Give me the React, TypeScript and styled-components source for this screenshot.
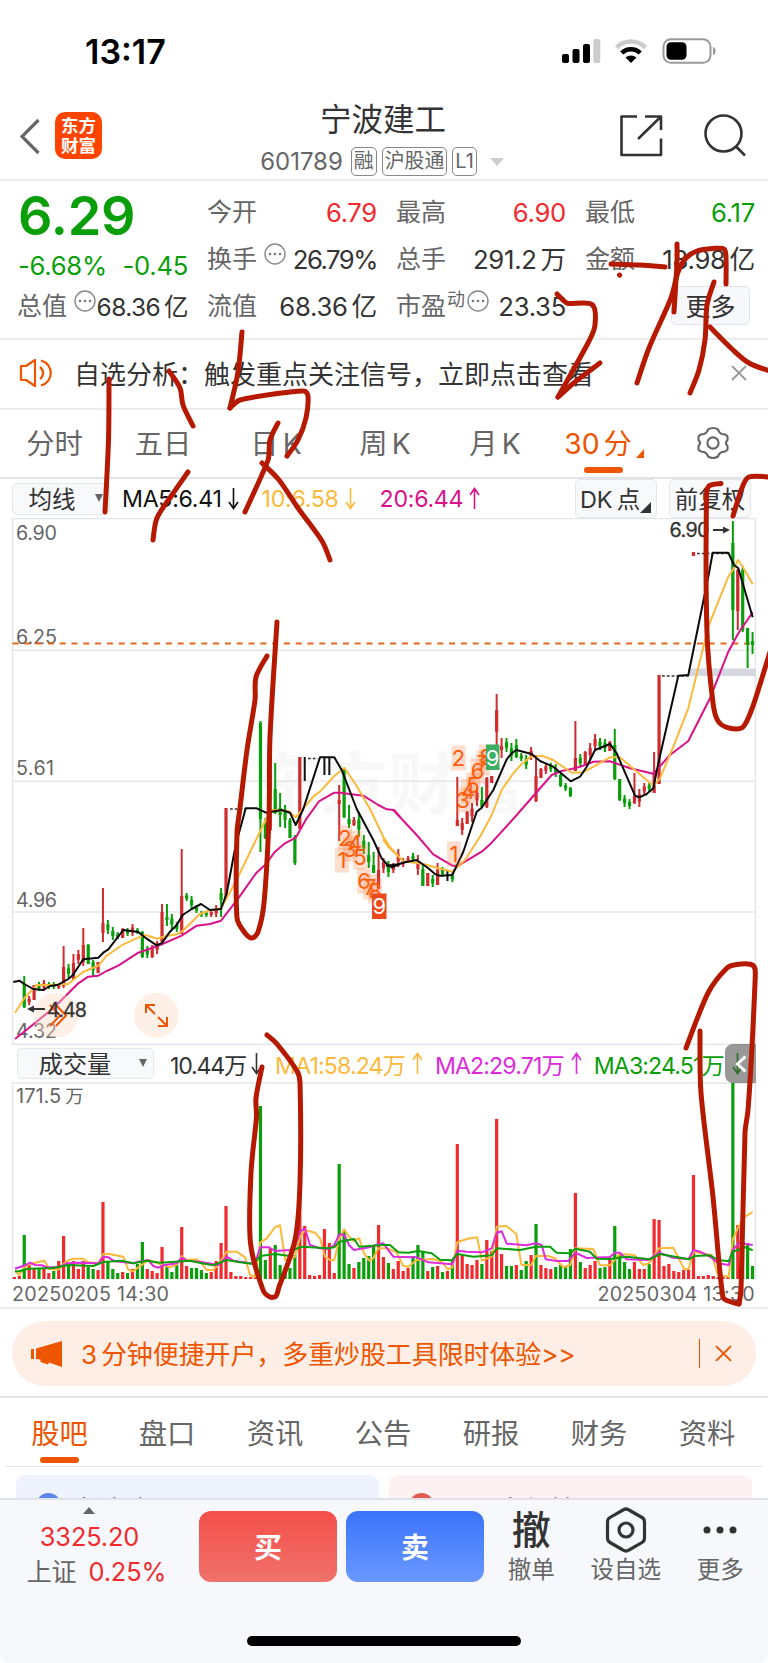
import React from "react";
import styled, { createGlobalStyle } from "styled-components";

const RED = "#f02a2d";
const GREEN = "#0a9f0a";
const ORANGE = "#ee5500";
const YELLOW = "#fbb93c";
const MAGENTA = "#d9128a";
const PURPLE = "#dd2bdd";

const GlobalStyle = createGlobalStyle`
  * { box-sizing: border-box; }
  body {
    margin: 0;
    background: #fff;
    font-family: Inter, "Noto Sans CJK SC", sans-serif;
    color: #333;
  }
  svg { display: block; flex: none; }
`;

const Page = styled.div`
  position: relative;
  width: 768px;
  height: 1663px;
  overflow: hidden;
  display: flex;
  flex-direction: column;
  background: #fff;
  white-space: nowrap;

  > * { flex: none; }
`;

const StatusBar = styled.div`
  height: 93px;
  padding: 9px 52px 0 85px;
  display: flex;
  align-items: center;
  justify-content: space-between;
`;

const Clock = styled.div`
  font-size: 34px;
  font-weight: 600;
  letter-spacing: 0;
  color: #000;
`;

const Header = styled.header`
  height: 88px;
  padding: 0 22px 0 20px;
  border-bottom: 2px solid #ececee;
  display: grid;
  grid-template-columns: 200px 1fr 200px;
`;

const HeaderSide = styled.div<{ $right?: boolean }>`
  display: flex;
  gap: ${(p) => (p.$right ? 41 : 15)}px;
  padding-top: ${(p) => (p.$right ? 21 : 19)}px;
  justify-content: ${(p) => (p.$right ? "flex-end" : "flex-start")};
`;

const AppLogo = styled.div`
  width: 47px;
  height: 47px;
  border-radius: 10px;
  background: #ff4400;
  color: #fff;
  font-size: 17.5px;
  font-weight: 700;
  line-height: 19.5px;
  padding-top: 4px;
  text-align: center;
`;

const HeaderCenter = styled.div`
  display: flex;
  flex-direction: column;
  align-items: center;
`;

const Title = styled.h1`
  margin: 9px 0 0;
  font-size: 31.5px;
  font-weight: 400;
  line-height: 36px;
  color: #333;
`;

const SubTitle = styled.div`
  display: flex;
  align-items: center;
  gap: 5px;
  margin: 9px 0 0 -2px;
  font-size: 24px;
  color: #666;
  line-height: 29px;
  letter-spacing: -0.05px;
`;

const Tag = styled.span<{ $first?: boolean }>`
  height: 29px;
  line-height: 26px;
  padding: 0 2px;
  margin-left: ${(p) => (p.$first ? 3 : 0)}px;
  border: 1.5px solid #888;
  border-radius: 5px;
  font-size: 19.9px;
  letter-spacing: 0;
`;

const Quote = styled.section`
  height: 159px;
  padding: 0 14px 0 18px;
  border-bottom: 2px solid #ececee;
  display: grid;
  grid-template-columns: 170px 169px 169px 169px;
  column-gap: 20px;
`;

const QuoteCol = styled.div`
  display: grid;
  grid-template-rows: 47px 47px 47px;
  padding-top: 7px;
`;

const Cell = styled.div<{ $color?: string; $drop?: number; $small?: boolean }>`
  display: flex;
  justify-content: space-between;
  align-items: center;
  font-size: ${(p) => (p.$small ? 24.5 : 25.7)}px;
  letter-spacing: ${(p) => (p.$small ? -0.6 : -0.3)}px;
  line-height: 30px;
  padding-top: ${(p) => p.$drop || 0}px;
  color: ${(p) => p.$color || "#333"};
`;

const Label = styled.span`
  display: flex;
  align-items: center;
  margin-left: -1px;
  color: #666;
  font-size: 25px;
  letter-spacing: 0;
  gap: 7px;
`;

const Value = styled.span<{ $tight?: boolean }>`
  padding-top: 2px;
  letter-spacing: ${(p) => (p.$tight ? "-1.5px" : "inherit")};
`;

const Small = styled.span`
  font-size: 18px;
  line-height: 20px;
  margin: -12px -5px 0 -6px;
`;

const Price = styled.div`
  font-size: 54px;
  font-weight: 600;
  letter-spacing: -0.2px;
  color: ${GREEN};
  line-height: 54px;
  padding-top: 1px;
`;

const Unit = styled.span`
  margin-left: 4px;
`;

const MoreButton = styled.button`
  width: 79px;
  height: 39px;
  margin-left: auto;
  margin-right: 5px;
  padding: 0;
  border: 1.5px solid #e2e4e9;
  border-radius: 5px;
  background: #f7f8fb;
  font: 400 25px "Noto Sans CJK SC", sans-serif;
  line-height: 33px;
  color: #333;
`;

const Notice = styled.section`
  height: 70px;
  padding: 0 21px 2px 19px;
  border-bottom: 2px solid #ececee;
  display: flex;
  align-items: center;
  font-size: 26px;
`;

const NoticeText = styled.span`
  margin-left: 21px;
  margin-top: -2px;
  flex: 1;
`;

const PeriodTabs = styled.nav`
  height: 69px;
  border-bottom: 2px solid #e2e4e8;
  display: grid;
  grid-template-columns: 109px 108px 118px 100px 120px 98px 120px;
`;

const Tab = styled.div<{ $active?: boolean; $lift?: number }>`
  position: relative;
  display: flex;
  align-items: center;
  justify-content: center;
  padding-bottom: ${(p) => p.$lift || 0}px;
  font-size: 28.3px;
  color: ${(p) => (p.$active ? ORANGE : "#666")};
`;

const Underline = styled.i<{ $bottom: number }>`
  position: absolute;
  left: calc(50% - 20px);
  bottom: ${(p) => p.$bottom}px;
  width: 39px;
  height: 6px;
  border-radius: 3px;
  background: ${ORANGE};
`;

const Corner = styled.i<{ $size: number; $color: string }>`
  position: absolute;
  right: 5px;
  bottom: 4px;
  border-left: ${(p) => p.$size}px solid transparent;
  border-bottom: ${(p) => p.$size}px solid ${(p) => p.$color};
`;

const IndicatorRow = styled.div<{ $height: number; $left: number }>`
  height: ${(p) => p.$height}px;
  padding: 0 17px 0 ${(p) => p.$left}px;
  display: flex;
  align-items: center;
  font-size: 23.2px;

  > * { flex: none; }
`;

const Picker = styled.div<{ $width: number; $height: number }>`
  position: relative;
  width: ${(p) => p.$width}px;
  height: ${(p) => p.$height}px;
  padding-bottom: 2px;
  border: 1.5px solid #e4e6ea;
  border-radius: 5px;
  background: #f8f9fb;
  display: flex;
  align-items: center;
  justify-content: center;
  font-size: 23.5px;
  color: #333;
`;

const Caret = styled.i<{ $gap: number }>`
  margin-left: ${(p) => p.$gap}px;
  border: 4.5px solid transparent;
  border-top: 8px solid #666;
  border-bottom: 0;
`;

const Legend = styled.span<{ $color: string; $left: number; $tight?: number; $gap?: number }>`
  color: ${(p) => p.$color};
  margin-left: ${(p) => p.$left}px;
  letter-spacing: ${(p) => p.$tight ?? -0.3}px;
  display: flex;
  align-items: center;
  gap: ${(p) => p.$gap ?? 6}px;
`;

const RightPickers = styled.div`
  margin-left: auto !important;
  display: flex;
  gap: 12px;
`;

const Dates = styled.div`
  height: 30px;
  padding: 4px 13px 0 12px;
  border-bottom: 2px solid #ececee;
  display: flex;
  justify-content: space-between;
  font-size: 19.7px;
  line-height: 23px;
  letter-spacing: 0.25px;
  color: #666;
`;

const BannerWrap = styled.div`
  height: 89px;
  padding: 12px 12px 0;
  border-bottom: 2px solid #e6e6e8;
`;

const Banner = styled.div`
  height: 65px;
  border-radius: 33px;
  background: #feeee5;
  display: flex;
  align-items: center;
  padding: 0 24px 0 19px;
  color: ${ORANGE};
  font-size: 26px;
`;

const BannerText = styled.span`
  margin-left: 19px;
  margin-top: -2px;
  flex: 1;
  letter-spacing: -0.1px;
`;

const Divider = styled.i`
  width: 1.5px;
  height: 29px;
  margin-right: 15px;
  background: ${ORANGE};
`;

const InfoTabs = styled.nav`
  height: 69px;
  margin: 0 6px;
  border-bottom: 1.5px solid #e2e4e8;
  display: grid;
  grid-template-columns: 107px repeat(6, 108px);
`;

const Cards = styled.div`
  height: 31px;
  padding: 8px 16px 0;
  display: grid;
  grid-template-columns: 1fr 1fr;
  gap: 10px;
  overflow: hidden;
`;

const Card = styled.div<{ $bg: string }>`
  height: 90px;
  border-radius: 9px 9px 0 0;
  background: ${(p) => p.$bg};
  padding: 18px 20px;
  display: flex;
  gap: 10px;
  font-size: 26.5px;
  line-height: 34px;
  font-weight: 500;
`;

const Dot = styled.i<{ $color: string }>`
  width: 25px;
  height: 25px;
  border-radius: 50%;
  background: ${(p) => p.$color};
`;

const Toolbar = styled.footer`
  height: 165px;
  border-top: 2px solid #dfe2e8;
  border-radius: 0 0 8px 8px;
  background: #f7f8fb;
  display: flex;
  flex-direction: column;
  align-items: center;
`;

const ToolbarRow = styled.div`
  width: 100%;
  height: 89px;
  padding-top: 6px;
  display: grid;
  grid-template-columns: 199px 285px 94.5px 94.5px 94.5px;
`;

const IndexBox = styled.div`
  display: flex;
  flex-direction: column;
  align-items: center;
  font-size: 25.4px;
  line-height: 35px;
  letter-spacing: -0.15px;
  color: ${RED};
`;

const IndexPrice = styled.span`
  margin-right: 20px;
`;

const IndexChange = styled.span`
  margin-right: 6px;
`;

const UpMark = styled.i`
  margin: 1px 21px 5px 0;
  border: 6.5px solid transparent;
  border-bottom: 7px solid #666;
  border-top: 0;
`;

const IndexName = styled.span`
  color: #666;
  margin-right: 12px;
  font-size: 25px;
`;

const Trades = styled.div`
  display: grid;
  grid-template-columns: 1fr 1fr;
  gap: 9px;
`;

const TradeButton = styled.button<{ $from: string; $to: string }>`
  height: 71px;
  margin: 5px 0 0;
  padding: 0 0 2px;
  border: 0;
  border-radius: 12px;
  background: linear-gradient(${(p) => p.$from}, ${(p) => p.$to});
  color: #fff;
  font: 700 28px "Noto Sans CJK SC", sans-serif;
`;

const Tool = styled.div`
  display: flex;
  flex-direction: column;
  align-items: center;
  font-size: 23.5px;
  color: #666;
  line-height: 31px;
`;

const ToolIcon = styled.div`
  height: 48px;
  display: flex;
  align-items: center;
  font-size: 39px;
  line-height: 48px;
  font-weight: 500;
  color: #333;
`;

const HomeBar = styled.i`
  width: 274px;
  height: 10px;
  margin-top: 47px;
  border-radius: 5px;
  background: #000;
`;

const Drawer = styled.div`
  position: absolute;
  left: 725px;
  top: 1044px;
  width: 31px;
  height: 39px;
  border-radius: 8px 0 0 8px;
  background: rgba(70, 70, 70, 0.55);
  display: flex;
  align-items: center;
  justify-content: center;
`;

const InkLayer = styled.svg`
  position: absolute;
  left: 0;
  top: 0;
  pointer-events: none;
`;

// bars are spaced evenly, 151 of them across the chart
const barX = (i: number) => 14.4 + i * 4.921;

// [origin x, origin y, "x,y x,y ..."] with the points in thirds of a pixel
type Segment = [number, number, string];

const trace = (segments: Segment[]) =>
  segments
    .map(([ox, oy, pts]) =>
      pts
        .split(" ")
        .map((p) => {
          const [x, y] = p.split(",").map(Number);
          return `${(ox + x / 3).toFixed(1)},${(oy + y / 3).toFixed(1)}`;
        })
        .join(" ")
    )
    .join(" ");

const ma5: Segment[] = [
  [0, 790, "40,576 58,572 73,582 100,597 130,600 150,588 175,584 205,567 218,556 250,508 295,503 310,488 325,478 370,420 415,426 440,446 470,466 485,460 510,425 530,405 548,375 575,357 603,342 630,360 663,357 680,310 707,165 737,55 770,55 798,68 845,60 870,68 887,105 910,57"],
  [0, 510, "960,742 1003,742 1025,780 1070,897"],
  [0, 790, "1085,85 1120,150 1145,205 1160,222 1175,232 1200,222"],
  [380, 700, "20,497 35,499 75,487 110,480 145,505 165,522 180,527 217,525 250,455 290,335 305,323 340,270 380,178 395,160 409,150 455,162 480,183 520,200 572,244 600,230 620,200 645,150 690,132 710,160 765,287 778,292 800,282 820,265 835,190"],
  [380, 510, "895,497 925,495 985,200 998,128 1045,128 1062,165 1075,175 1118,322"],
];

const ma10: Segment[] = [
  [0, 790, "45,668 73,625 110,585 150,585 205,582 250,545 295,527 320,497 370,463 430,436 440,436 470,446 500,438 530,433 545,425 600,372 625,362 663,355 707,275 798,88 812,60 865,63 887,82 910,55"],
  [0, 510, "945,855 960,845 1003,798 1033,773 1070,828"],
  [0, 790, "1110,57 1150,140 1175,180 1200,203"],
  [380, 700, "10,420 25,440 70,483 130,492 160,500 217,515 255,480 300,410 335,345 365,270 400,220 425,192 450,172 485,167 520,180 575,218 610,217 690,172 720,172 820,257 840,235 880,140"],
  [380, 510, "925,595 985,350 1045,200 1062,175 1074,150 1085,165 1118,223"],
];

const ma20: Segment[] = [
  [0, 790, "45,747 160,655 235,580 265,560 295,557 320,543 355,527 415,488 480,465 545,437 590,407 630,402 663,392 715,325 768,250 798,222 825,185 855,160 887,143 920,85 958,33 1003,8"],
  [0, 510, "1020,848 1090,857 1135,885 1160,898"],
  [0, 790, "1182,60 1200,80"],
  [380, 700, "40,330 110,405 160,463 217,497 235,497 305,455 335,428 410,345 515,225 545,213 575,207 600,200 640,185 690,184 750,205 820,221 870,165 925,123"],
  [380, 510, "990,565 1045,425 1075,370 1118,307"],
];

const vol1: Segment[] = [
  [0, 1030, "45,722 58,735 73,712 90,702 133,692 148,717 175,719 192,700 207,690 221,686 250,686 265,697 295,700 310,672 328,672 370,680 385,720 400,724 415,712 430,702 445,690 480,702 510,712 530,704 545,678 560,690 590,688 605,700 620,720 640,720 655,704 680,665 710,665 735,682 750,735 765,740 781,637 800,625 825,592 840,586 856,690 885,680 900,620 915,600 945,608 960,625 975,680 990,690 1003,690 1018,625 1033,598 1045,617 1060,632 1078,625 1092,670 1108,692 1120,685 1135,655 1155,655"],
  [380, 1030, "30,658 50,668 70,708 85,710 110,690 160,687 185,695 203,718 217,712 232,637 260,627 291,622 306,692 335,680 350,590 378,587 409,612 424,704 453,706 468,677 505,678 525,685 550,712 571,705 586,655 640,657 660,706 690,706 719,672 763,675 790,705 807,700 837,655 880,653 912,716 926,717 940,665 995,675 1014,735 1046,740 1058,630 1075,590 1095,560 1118,546"],
];

const vol2: Segment[] = [
  [0, 1030, "45,716 75,706 90,698 105,705 125,706 140,712 175,712 200,700 235,698 295,700 310,680 325,682 345,694 400,700 415,695 445,690 460,708 475,713 490,706 530,700 545,683 560,692 600,695 655,705 680,680 700,692 750,700 765,700 781,652 807,652 825,663 870,660 885,650 900,605 915,596 930,645 960,655 985,657 1003,645 1018,613 1033,615 1047,645 1062,660 1108,652 1135,643"],
  [380, 1030, "10,640 40,680 110,682 145,697 217,703 232,662 260,665 306,667 335,655 350,608 365,604 380,641 440,646 468,640 485,645 497,688 530,693 565,693 586,668 620,684 690,681 704,668 719,668 740,688 805,690 837,668 880,683 926,687 940,660 960,665 995,683 1014,700 1046,705 1058,660 1078,638 1118,645"],
];

const vol3: Segment[] = [
  [0, 1030, "45,724 58,724 85,716 160,714 205,705 280,708 310,696 365,692 400,700 440,692 480,698 570,692 605,700 640,706 680,690 720,697 760,702 781,678 825,672 870,678 885,658 905,650 985,655 1003,652 1018,635 1062,627 1078,650 1150,645"],
  [380, 1030, "30,645 55,667 85,668 115,663 155,670 180,689 215,691 232,672 280,680 335,676 350,655 420,660 468,650 510,650 530,668 571,670 586,656 630,665 650,686 690,687 740,680 810,688 840,672 926,688 945,678 990,676 1015,690 1046,694 1058,665 1095,652 1118,661"],
];

// index, direction, wick top, wick bottom, body top, body bottom
type Candle = [number, "r" | "g" | "k", number, number, number?, number?];

const candles: Candle[] = [
  [2, "g", 976, 1008, 984, 1007], [3, "r", 996, 1005], [4, "r", 985, 1000, 985, 1000], [5, "g", 982, 991],
  [6, "r", 980, 991], [7, "g", 982, 989], [8, "g", 982, 989], [9, "r", 984, 989], [10, "r", 946, 988, 967, 986],
  [11, "g", 964, 978], [12, "r", 954, 980, 963, 979], [13, "r", 950, 964], [14, "r", 928, 966, 945, 962],
  [15, "g", 944, 964, 945, 964], [16, "g", 960, 977, 962, 970], [17, "r", 962, 973, 962, 973], [18, "r", 888, 942, 923, 933],
  [19, "g", 920, 934], [20, "g", 927, 940], [21, "g", 932, 939], [22, "r", 928, 938, 929, 938], [23, "g", 928, 936],
  [24, "r", 924, 936], [25, "g", 928, 934], [26, "g", 931, 958, 932, 957], [27, "g", 946, 958], [28, "r", 945, 958, 947, 957],
  [29, "r", 941, 954], [30, "r", 904, 943, 912, 942], [31, "g", 904, 926, 917, 920], [32, "g", 914, 929], [33, "g", 922, 932],
  [34, "r", 849, 934, 896, 934], [35, "g", 893, 901], [36, "g", 896, 909], [37, "g", 905, 913], [38, "g", 911, 917],
  [39, "g", 911, 917], [40, "r", 910, 917], [41, "r", 905, 917], [42, "g", 888, 917, 893, 900], [43, "r", 808, 898, 808, 898],
  [50, "g", 721, 852, 723, 819], [51, "g", 818, 839, 823, 838], [52, "r", 808, 831, 809, 830], [53, "g", 763, 814, 789, 813],
  [54, "g", 793, 827, 808, 815], [55, "g", 805, 828, 810, 820], [56, "g", 818, 838, 820, 838], [57, "g", 835, 865, 837, 863],
  [58, "r", 757, 829, 757, 829], [59, "k", 757, 781], [63, "k", 757, 775], [64, "k", 757, 775], [66, "r", 785, 841, 800, 804],
  [67, "g", 769, 818, 770, 817], [68, "g", 805, 828, 819, 824], [69, "r", 817, 826, 820, 825], [70, "g", 812, 837], [71, "g", 835, 854],
  [72, "g", 842, 868, 855, 862], [73, "g", 852, 873, 865, 873], [74, "r", 847, 889, 870, 888], [75, "r", 858, 873], [76, "g", 861, 877],
  [77, "r", 863, 873], [78, "r", 849, 867], [79, "r", 858, 867], [80, "r", 856, 863], [81, "g", 853, 862], [82, "r", 855, 875],
  [83, "g", 865, 886, 869, 886], [84, "r", 873, 886, 873, 886], [85, "g", 875, 887], [86, "r", 863, 885, 870, 885], [87, "g", 867, 877],
  [88, "k", 871, 881], [89, "g", 873, 882], [90, "r", 777, 826, 820, 826], [91, "r", 818, 835], [92, "r", 811, 824, 812, 824],
  [93, "r", 803, 822], [94, "r", 787, 806], [95, "g", 787, 807, 800, 807], [96, "r", 777, 808, 778, 807], [97, "r", 776, 783, 776, 783],
  [98, "r", 694, 748], [99, "r", 738, 758, 746, 750], [100, "g", 738, 752], [101, "g", 743, 761], [102, "g", 739, 758, 745, 757],
  [103, "g", 753, 761], [104, "g", 755, 769], [105, "r", 747, 760], [106, "r", 755, 802, 776, 801], [107, "r", 768, 778, 769, 778],
  [108, "r", 763, 774], [109, "g", 763, 772], [110, "g", 764, 777], [111, "g", 774, 787, 775, 786], [112, "g", 783, 791],
  [113, "g", 787, 797, 788, 796], [114, "r", 721, 771, 758, 771], [115, "g", 754, 767], [116, "r", 751, 765, 752, 764], [117, "r", 743, 760],
  [118, "r", 734, 751], [119, "g", 738, 750], [120, "g", 739, 752], [121, "r", 741, 751, 742, 751], [122, "g", 729, 780, 745, 779],
  [123, "g", 779, 801, 779, 800], [124, "g", 795, 807], [125, "g", 799, 809], [126, "r", 773, 804, 796, 803], [127, "r", 789, 807],
  [128, "r", 783, 795], [129, "g", 783, 791], [130, "r", 752, 793, 772, 793], [131, "r", 675, 784, 675, 784], [138, "r", 552, 556, 552, 556],
  [146, "g", 521, 640, 543, 610], [147, "r", 569, 630, 570, 611], [148, "g", 566, 632, 570, 630], [149, "g", 628, 668, 628, 645],
  [150, "g", 632, 654, 641, 645],
];

const volumes =
  "r2 r3 g44 r16 r10 g10 r11 r6 g8 r18 r43 g15 r18 r10 r18 g12 g10 r9 r77 g17 g10 g6 r7 g6 r10 g15 g37 r10 r8 r6 r32 g12 g7 g14 r52 r13 g11 g11 g9 g6 r7 r18 r36 r73 r7 r3 r3 r2 r2 r2 g173 g19 r31 g34 g14 g11 g11 g24 r110 r53 r4 r3 r4 r50 r36 r6 g115 g49 g15 r11 g17 g21 g23 g34 r54 r22 g16 r10 r18 r8 r11 g23 g34 g27 r8 g12 r13 g7 r8 g18 r135 r25 r15 r14 r19 g15 r39 r28 r160 r25 g13 g13 r14 g9 g18 r24 g55 r14 r11 r10 g12 g14 g13 g30 r86 g17 r11 r14 r18 g11 g12 r20 g53 g25 g17 g10 r17 r10 r10 g15 r60 r59 r13 r15 r8 r7 r9 r9 r104 r3 r3 r4 r3 r2 r2 r2 g196 r54 g38 g36 g13".split(" ");

const counts: [string, number, number][] = [
  ["1", 342, 860], ["2", 345, 838], ["3", 350, 849], ["4", 355, 843], ["5", 360, 857], ["6", 364, 881],
  ["7", 370, 887], ["8", 375, 891], ["1", 454, 854], ["2", 458.5, 758], ["3", 463, 800], ["4", 468, 791],
  ["5", 473, 785], ["6", 477.5, 771], ["7", 483, 763], ["8", 486, 757],
];

const candleColors = { r: "#d02c30", g: GREEN, k: "#111" };

const PriceChart = (): JSX.Element => (
  <svg width="768" height="527" viewBox="0 518 768 527" fontFamily="Inter, sans-serif">
    <text x="252" y="809" fontSize="68" fontWeight="700" fill="#f8f8f8" textLength="272" fontFamily="Noto Sans CJK SC, sans-serif">东方财富</text>
    <path d="M12.5 518.5H755.5V1044.3H12.5ZM12.5 650.3H755.5M12.5 781.3H755.5M12.5 912H755.5" fill="none" stroke="#e5e5ec" strokeWidth="1.5" />
    <rect x="688" y="668.5" width="67.5" height="7.5" fill="#d4d8de" />
    <g fontSize="19.7" fill="#666">
      <text x="16" y="539.5" textLength="41">6.90</text>
      <text x="16" y="643.5" textLength="41">6.25</text>
      <text x="16" y="775" textLength="38">5.61</text>
      <text x="16" y="906.5" textLength="41">4.96</text>
      <text x="16" y="1038" textLength="41">4.32</text>
    </g>
    <path d="M12.5 643.5H755" stroke="#e2691f" strokeWidth="2" strokeDasharray="6 5.8" />
    {candles.map(([i, dir, high, low, top, bottom]) => (
      <g key={i} fill={candleColors[dir]}>
        <rect x={barX(i) - 1} y={high} width={2} height={low - high} />
        {dir !== "k" && (
          <rect
            x={barX(i) - 1.6}
            y={top ?? high + (low - high) * 0.3}
            width={3.2}
            height={top ? bottom! - top : (low - high) * 0.4}
          />
        )}
      </g>
    ))}
    <path d="M230 809H246M308 758.5H318M662 676H690M697 553.5H728" stroke="#333" strokeWidth="1.7" strokeDasharray="2.8 2" />
    <g fill="none" strokeWidth="2" strokeLinejoin="round">
      <polyline points={trace(ma20)} stroke={MAGENTA} />
      <polyline points={trace(ma10)} stroke={YELLOW} />
      <polyline points={trace(ma5)} stroke="#0a0a0a" />
    </g>
    {counts.map(([n, x, y]) => (
      <g key={`${x}-${y}`}>
        <rect x={x - 7} y={y - 12.5} width="14" height="25" fill="#ff7a3c" fillOpacity="0.25" />
        <text x={x} y={y + 8} fontSize="22" fill="#ff5a0a" textAnchor="middle">{n}</text>
      </g>
    ))}
    <rect x="372" y="893.5" width="14.5" height="25.5" fill="#ea4a1c" />
    <rect x="486" y="744.5" width="13.5" height="25.5" fill="#3cad62" />
    <g fontSize="22" fill="#fff" textAnchor="middle">
      <text x="379.3" y="914">9</text>
      <text x="492.7" y="765.5">9</text>
    </g>
    <g fill="#ffd9c4" fillOpacity="0.4">
      <circle cx="56" cy="1015.3" r="22.5" />
      <circle cx="156.4" cy="1015.3" r="22.5" />
    </g>
    <g fill="none" stroke={ORANGE} strokeWidth="2">
      <path d="M50 1005L60 1015.5 50 1026M56 1005L66 1015.5 56 1026" />
      <path d="M146 1013V1005H155M146 1005L155 1014M158 1026H167V1017M167 1026L158 1017" />
    </g>
    <g fontSize="19.7" fill="#333" stroke="#333" strokeWidth="0.3">
      <text x="47" y="1016.5" textLength="40">4.48</text>
      <text x="669.5" y="537" textLength="40">6.90</text>
    </g>
    <path d="M45 1009H29M713 530H728" stroke="#333" strokeWidth="1.8" />
    <path d="M27 1009L34 1005.5V1012.5ZM730 530L723 526.5V533.5Z" fill="#333" />
  </svg>
);

const VolumeChart = (): JSX.Element => (
  <svg width="768" height="197" viewBox="0 1082 768 197">
    <path d="M12.5 1279V1083H755.5V1279" fill="none" stroke="#e5e5ec" strokeWidth="1.5" />
    <text x="16" y="1103" fontSize="20" fill="#666" fontFamily="Inter, sans-serif">
      171.5
      <tspan dx="4" fontSize="18.5" fontFamily="Noto Sans CJK SC, sans-serif">万</tspan>
    </text>
    {volumes.map((v, i) => {
      const h = Number(v.slice(1));
      return <rect key={i} x={barX(i) - 1.6} y={1279 - h} width={3.2} height={h} fill={v[0] === "r" ? RED : GREEN} />;
    })}
    <g fill="none" strokeWidth="2" strokeLinejoin="round">
      <polyline points={trace(vol1)} stroke={YELLOW} />
      <polyline points={trace(vol2)} stroke={PURPLE} />
      <polyline points={trace(vol3)} stroke={GREEN} />
    </g>
  </svg>
);

// freehand strokes, each a run of x,y pairs
const strokes: number[][] = [
  [611, 264, 640, 265, 665, 267],
  [619.5, 275, 619.6, 275.2],
  [677, 244, 677, 262, 674, 312],
  [637, 383, 649, 348, 671, 298, 678, 272, 686, 258, 697, 251, 713, 248.5, 724, 249, 726, 258, 726, 284],
  [714, 282, 707, 305, 705, 340, 699, 370, 690, 393],
  [710, 327, 732, 349, 749, 363, 770, 371],
  [557, 294, 563, 300, 568, 303.5, 592, 304.5, 595, 325, 588, 343, 558, 397],
  [558, 397, 575, 382, 600, 363],
  [109, 379, 108.5, 440, 105, 512],
  [169, 371, 180, 388, 183, 405, 193, 426],
  [188, 472, 172, 495, 157, 518, 153, 540],
  [242, 332, 238, 372, 230, 408],
  [230, 408, 240, 400, 274, 394, 304, 391, 308, 396, 306, 418, 298, 440, 287, 456],
  [278, 423, 270, 440, 268, 460, 245, 512],
  [262, 463, 279, 480, 298, 508, 322, 541, 330, 560],
  [267, 656, 256, 677, 255, 700, 247, 750, 240, 808, 237, 833, 237, 918, 245, 933, 252, 938, 258, 932, 264, 903, 269, 817, 270, 737, 277, 622],
  [267, 1035, 277, 1044, 297, 1071, 300, 1083, 300, 1183, 295, 1240, 279, 1287, 276, 1296, 270, 1297, 263, 1290, 250.5, 1243, 251, 1173, 256.5, 1117, 256, 1098, 262, 1067],
  [721, 483.5, 709, 486, 706.5, 495, 707, 633, 713, 703, 718, 721, 729, 728, 743, 727, 753, 706, 770, 652],
  [770, 477, 749, 477, 742, 488, 733, 516],
  [686, 1048, 708, 993, 727, 968, 737, 964.5, 751, 964.5, 755, 969, 755, 983, 752, 1047, 748, 1110, 745, 1133, 741, 1290, 739, 1304],
  [739, 1304, 733, 1302.5, 723, 1297, 713, 1197, 701, 1093, 700, 1031],
];

const smooth = (s: number[]) => {
  const at = (i: number) => {
    const k = Math.max(0, Math.min(s.length / 2 - 1, i));
    return [s[k * 2], s[k * 2 + 1]];
  };
  let d = `M${s[0]} ${s[1]}`;
  for (let i = 0; i < s.length / 2 - 1; i++) {
    const [a, b, c, e] = [at(i - 1), at(i), at(i + 1), at(i + 2)];
    // handles are capped by the length of the current span
    const span = Math.hypot(c[0] - b[0], c[1] - b[1]) / 3;
    const handle = (p: number[], q: number[]) => {
      const len = Math.hypot(q[0] - p[0], q[1] - p[1]) || 1;
      const k = Math.min(len / 6, span) / len;
      return [(q[0] - p[0]) * k, (q[1] - p[1]) * k];
    };
    const h1 = handle(a, c);
    const h2 = handle(b, e);
    d += `C${b[0] + h1[0]} ${b[1] + h1[1]} ${c[0] - h2[0]} ${c[1] - h2[1]} ${c[0]} ${c[1]}`;
  }
  return d;
};

const Ink = (): JSX.Element => (
  <InkLayer width="768" height="1663" viewBox="0 0 768 1663" fill="none" stroke="#b51a00" strokeWidth="5" strokeLinecap="round" strokeLinejoin="round">
    {strokes.map((s, i) => (
      <path key={i} d={smooth(s)} />
    ))}
  </InkLayer>
);

const MoreDotsIcon = styled.svg`
  margin-top: -10px;
`;

const MoreDots = (): JSX.Element => (
  <MoreDotsIcon width="22" height="22" viewBox="0 0 22 22">
    <circle cx="11" cy="11" r="10" fill="none" stroke="#888" strokeWidth="1.4" />
    <g fill="#777">
      <circle cx="6" cy="11" r="1.3" />
      <circle cx="11" cy="11" r="1.3" />
      <circle cx="16" cy="11" r="1.3" />
    </g>
  </MoreDotsIcon>
);

const Arrow = ({ up }: { up?: boolean }): JSX.Element => (
  <svg width="11" height="23" viewBox="0 0 11 23" fill="none" stroke="currentColor" strokeWidth="1.6">
    <path d={up ? "M5.5 22V2M1 8L5.5 1.5 10 8" : "M5.5 1V21M1 15L5.5 21.5 10 15"} />
  </svg>
);

const Close = ({ size, color }: { size: number; color: string }): JSX.Element => (
  <svg width={size} height={size} viewBox="0 0 16 16" stroke={color} strokeWidth="1.8">
    <path d="M1 1L15 15M15 1L1 15" />
  </svg>
);

const StatusIcons = (): JSX.Element => (
  <svg width="154" height="26" viewBox="562 38 154 26">
    <rect x="562" y="54" width="7" height="9" rx="2" />
    <rect x="572.5" y="49" width="7" height="14" rx="2" />
    <rect x="583" y="44" width="7" height="19" rx="2" />
    <rect x="593.3" y="39" width="7" height="24" rx="2" fill="#ccc" />
    <g fill="none" strokeWidth="4.6">
      <path d="M616.5 47.5A20.5 20.5 0 0 1 645.5 47.5" stroke="#ccc" />
      <path d="M621.8 53A13 13 0 0 1 640.2 53" stroke="#000" />
    </g>
    <path d="M625.5 57.6A8 8 0 0 1 636.5 57.6L631 63Z" />
    <rect x="663.5" y="39.2" width="47" height="23.6" rx="7.5" fill="none" stroke="#999" strokeWidth="2" />
    <rect x="666.5" y="42.2" width="20" height="17.6" rx="4.5" />
    <path d="M713 47C716.5 48 716.5 54 713 55Z" fill="#999" />
  </svg>
);

const periods = [
  <>分时</>,
  <>五日</>,
  <>日<Unit>K</Unit></>,
  <>周<Unit>K</Unit></>,
  <>月<Unit>K</Unit></>,
];
const infoTabs = ["股吧", "盘口", "资讯", "公告", "研报", "财务", "资料"];

const App = (): JSX.Element => {
  return (
    <Page>
      <GlobalStyle />
      <StatusBar>
        <Clock>13:17</Clock>
        <StatusIcons />
      </StatusBar>
      <Header>
        <HeaderSide>
          <svg width="20" height="47" viewBox="0 0 20 47" fill="none" stroke="#666" strokeWidth="3.2">
            <path d="M18.5 8L2 24.5 18.5 41" />
          </svg>
          <AppLogo>
            东方
            <br />
            财富
          </AppLogo>
        </HeaderSide>
        <HeaderCenter>
          <Title>宁波建工</Title>
          <SubTitle>
            601789
            <Tag $first>融</Tag>
            <Tag>沪股通</Tag>
            <Tag>L1</Tag>
            <svg width="14" height="8" viewBox="0 0 14 8" style={{ marginLeft: 8 }}>
              <path d="M0 0H14L7 8Z" fill="#ccc" />
            </svg>
          </SubTitle>
        </HeaderCenter>
        <HeaderSide $right>
          <svg width="44" height="44" viewBox="619 114 44 44" fill="none" stroke="#333" strokeWidth="2.6">
            <path d="M637 116.5H621.5V155H661V138.5M645 116.5H661V130M661 116.5L638 139" strokeLinejoin="round" />
          </svg>
          <svg width="42" height="44" viewBox="704 114 42 44" fill="none" stroke="#333" strokeWidth="2.6">
            <circle cx="723.5" cy="133.5" r="18" />
            <path d="M736 146.5L745 155.5" />
          </svg>
        </HeaderSide>
      </Header>

      <Quote>
        <QuoteCol>
          <Price>6.29</Price>
          <Cell $color={GREEN} $drop={15}>
            <span>-6.68%</span>
            <span>-0.45</span>
          </Cell>
          <Cell $small>
            <Label>总值<MoreDots /></Label>
            <Value>68.36<Unit>亿</Unit></Value>
          </Cell>
        </QuoteCol>
        <QuoteCol>
          <Cell $color={RED}>
            <Label>今开</Label>
            <Value>6.79</Value>
          </Cell>
          <Cell $drop={1}>
            <Label>换手<MoreDots /></Label>
            <Value $tight>26.79%</Value>
          </Cell>
          <Cell>
            <Label>流值</Label>
            <Value>68.36<Unit>亿</Unit></Value>
          </Cell>
        </QuoteCol>
        <QuoteCol>
          <Cell $color={RED}>
            <Label>最高</Label>
            <Value>6.90</Value>
          </Cell>
          <Cell $drop={1}>
            <Label>总手</Label>
            <Value>291.2<Unit>万</Unit></Value>
          </Cell>
          <Cell>
            <Label>市盈 <Small>动</Small><MoreDots /></Label>
            <Value>23.35</Value>
          </Cell>
        </QuoteCol>
        <QuoteCol>
          <Cell $color={GREEN}>
            <Label>最低</Label>
            <Value>6.17</Value>
          </Cell>
          <Cell $drop={1}>
            <Label>金额</Label>
            <Value>18.98<Unit>亿</Unit></Value>
          </Cell>
          <Cell>
            <MoreButton>更多</MoreButton>
          </Cell>
        </QuoteCol>
      </Quote>

      <Notice>
        <svg width="34" height="30" viewBox="0 0 34 30" fill="none" stroke={ORANGE} strokeWidth="2.2">
          <path d="M2 8H7L16 2V28L7 22H2Z" strokeLinejoin="round" />
          <path d="M21 9C25 12 25 18 21 21M22 2.5C35 6 35 24 22 27.5" />
        </svg>
        <NoticeText>自选分析：触发重点关注信号，立即点击查看</NoticeText>
        <Close size={16} color="#999" />
      </Notice>

      <PeriodTabs>
        {periods.map((p, i) => (
          <Tab key={i} $lift={4}><span>{p}</span></Tab>
        ))}
        <Tab $active $lift={4}>
          <span>30<Unit>分</Unit></span>
          <svg width="8" height="9" viewBox="0 0 8 9" style={{ margin: "24px 0 0 4px" }}>
            <path d="M8 0V9H0Z" fill={ORANGE} />
          </svg>
          <Underline $bottom={4} />
        </Tab>
        <Tab $lift={2}>
          <svg width="34" height="34" viewBox="0 0 34 34" fill="none" stroke="#666" strokeWidth="2.1" strokeLinejoin="round">
            <path d="M12 3.5Q17 .5 22 3.5Q23 7 26 8Q30 8 31.5 10.5V14Q28.500 17 31.5 20V23.500Q30 26 26 26Q23 27 22 30.500Q17 33.500 12 30.500Q11 27 8 26Q4 26 2.500 23.500V20Q5.500 17 2.500 14V10.500Q4 8 8 8Q11 7 12 3.500Z" />
            <circle cx="17" cy="17" r="5.6" />
          </svg>
        </Tab>
      </PeriodTabs>

      <IndicatorRow $height={39} $left={12}>
        <Picker $width={98} $height={32}>
          <span style={{ marginLeft: 9 }}>均线</span>
          <Caret $gap={19} />
        </Picker>
        <Legend $color="#111" $left={12}>MA5:6.41<Arrow /></Legend>
        <Legend $color={YELLOW} $left={23}>10:6.58<Arrow /></Legend>
        <Legend $color={MAGENTA} $left={24}>20:6.44<Arrow up /></Legend>
        <RightPickers>
          <Picker $width={82} $height={39}>
            <span style={{ marginRight: 12 }}>DK<Unit>点</Unit></span>
            <Corner $size={11} $color="#333" />
          </Picker>
          <Picker $width={82} $height={39}>前复权</Picker>
        </RightPickers>
      </IndicatorRow>

      <PriceChart />

      <IndicatorRow $height={37} $left={17}>
        <Picker $width={137} $height={31}>
          <span style={{ marginLeft: 15, fontSize: 24.2 }}>成交量</span>
          <Caret $gap={28} />
        </Picker>
        <Legend $color="#333" $left={16} $tight={-1.2} $gap={5}>10.44万<Arrow /></Legend>
        <Legend $color={YELLOW} $left={13} $tight={-0.9} $gap={7}>MA1:58.24万<Arrow up /></Legend>
        <Legend $color={PURPLE} $left={12} $tight={-0.9} $gap={7}>MA2:29.71万<Arrow up /></Legend>
        <Legend $color={GREEN} $left={12} $tight={-0.9} $gap={8}>MA3:24.51万<Arrow /></Legend>
      </IndicatorRow>

      <VolumeChart />

      <Dates>
        <span>20250205 14:30</span>
        <span>20250304 13:30</span>
      </Dates>

      <BannerWrap>
        <Banner>
          <svg width="31" height="38" viewBox="0 -6 31 38" fill={ORANGE}>
            <path d="M0 8H3V18H0ZM5 7.500L31 0V26L18 21.500 17 23.500 9.500 21V18.500L5 18Z" />
          </svg>
          <BannerText>3<Unit>分钟便捷开户，多重炒股工具限时体验&gt;&gt;</Unit></BannerText>
          <Divider />
          <Close size={17} color={ORANGE} />
        </Banner>
      </BannerWrap>

      <InfoTabs>
        {infoTabs.map((t, i) => (
          <Tab key={t} $active={i === 0} $lift={1}>
            {t}
            {i === 0 && <Underline $bottom={3} />}
          </Tab>
        ))}
      </InfoTabs>

      <Cards>
        <Card $bg="#eef3fe">
          <Dot $color="#5b86ee" />
          宁波建工
        </Card>
        <Card $bg="#fef1f1">
          <Dot $color="#e25b55" />
          股票大年榜
        </Card>
      </Cards>

      <Toolbar>
        <ToolbarRow>
          <IndexBox>
            <UpMark />
            <IndexPrice>3325.20</IndexPrice>
            <IndexChange><IndexName>上证</IndexName>0.25%</IndexChange>
          </IndexBox>
          <Trades>
            <TradeButton $from="#f44f4a" $to="#f0716b">买</TradeButton>
            <TradeButton $from="#3a74fa" $to="#6a98ff">卖</TradeButton>
          </Trades>
          <Tool>
            <ToolIcon>撤</ToolIcon>
            撤单
          </Tool>
          <Tool>
            <ToolIcon>
              <svg width="42" height="46" viewBox="0 0 42 46" fill="none" stroke="#333" strokeWidth="3.2" strokeLinejoin="round">
                <path d="M18 3Q21 1 24 3L37 10.500Q39.500 12 39.500 15V31Q39.500 34 37 35.500L24 43Q21 45 18 43L5 35.500Q2.500 34 2.500 31V15Q2.500 12 5 10.500Z" />
                <circle cx="21" cy="23" r="7" />
              </svg>
            </ToolIcon>
            设自选
          </Tool>
          <Tool>
            <ToolIcon>
              <svg width="34" height="8" viewBox="0 0 34 8" fill="#333">
                <circle cx="4" cy="4" r="3.500" />
                <circle cx="17" cy="4" r="3.500" />
                <circle cx="30" cy="4" r="3.500" />
              </svg>
            </ToolIcon>
            更多
          </Tool>
        </ToolbarRow>
        <HomeBar />
      </Toolbar>

      <Drawer>
        <svg width="12" height="18" viewBox="0 0 12 18" fill="none" stroke="#fff" strokeWidth="3">
          <path d="M10.500 1.500L2.500 9 10.500 16.500" />
        </svg>
      </Drawer>
      <Ink />
    </Page>
  );
};

export default App;
